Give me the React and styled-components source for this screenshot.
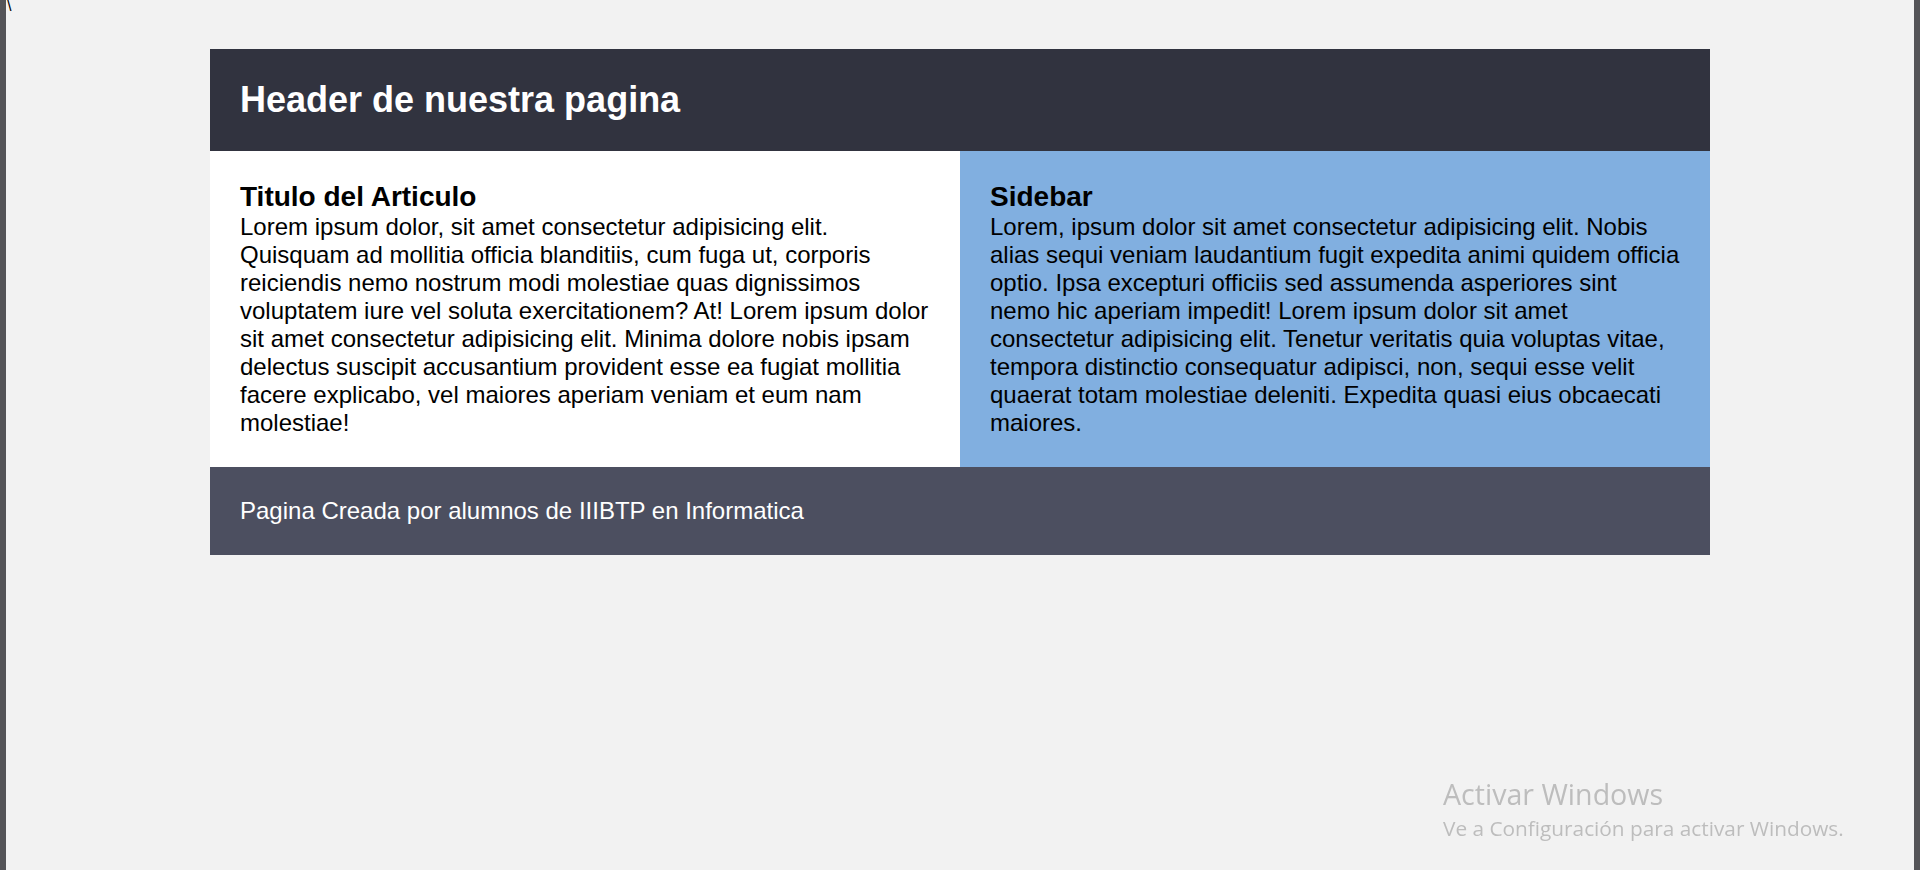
import React from "react";
import styled, { createGlobalStyle } from "styled-components";

const GlobalStyle = createGlobalStyle`
  html, body {
    margin: 0;
    padding: 0;
    background: #f2f2f2;
    font-family: "Liberation Sans", Arial, sans-serif;
  }
`;

const Screen = styled.div`
  display: flex;
  min-height: 100vh;
  background: #f2f2f2;
`;

const WindowEdge = styled.div`
  width: 6px;
  flex-shrink: 0;
  background: #545458;
`;

const Viewport = styled.div`
  flex: 1;
  position: relative;
`;

const Stray = styled.div`
  height: 13px;
  padding-left: 1px;
  font-size: 16px;
  line-height: 12px;
  color: #000;
  overflow: hidden;
`;

const Layout = styled.div`
  width: 1500px;
  margin: 36px auto 0;
  display: grid;
  grid-template-columns: 1fr 1fr;
  grid-template-areas:
    "header header"
    "main side"
    "footer footer";
`;

const Header = styled.header`
  grid-area: header;
  background: #31333f;
  color: #fff;
  padding: 30px;

  h1 {
    margin: 0;
    font-size: 36px;
    font-weight: 700;
  }
`;

const Panel = styled.section`
  grid-area: ${({ $area }) => $area};
  background: ${({ $bg }) => $bg};
  color: #000;
  padding: 30px;
  font-size: 24px;

  h3 {
    margin: 0;
    font-size: 28px;
    font-weight: 700;
  }

  p {
    margin: 0;
  }
`;

const Footer = styled.footer`
  grid-area: footer;
  background: #4c4f60;
  color: #fff;
  padding: 30px;
  font-size: 24px;
`;

const Watermark = styled.div`
  position: fixed;
  left: 1443px;
  top: 776px;
  font-family: "Open Sans", "Noto Sans", sans-serif;
  color: #bdbdbd;
  pointer-events: none;
`;

const WatermarkTitle = styled.div`
  font-size: 28.6px;
  line-height: 36px;
`;

const WatermarkText = styled.div`
  font-size: 20.8px;
  line-height: 33px;
`;

const App = () => {
  return (
    <>
      <GlobalStyle />
      <Screen>
        <WindowEdge />
        <Viewport>
          <Stray>\</Stray>
          <Layout>
            <Header>
              <h1>Header de nuestra pagina</h1>
            </Header>
            <Panel $area="main" $bg="#ffffff">
              <h3>Titulo del Articulo</h3>
              <p>
                Lorem ipsum dolor, sit amet consectetur adipisicing elit.
                Quisquam ad mollitia officia blanditiis, cum fuga ut, corporis
                reiciendis nemo nostrum modi molestiae quas dignissimos
                voluptatem iure vel soluta exercitationem? At! Lorem ipsum dolor
                sit amet consectetur adipisicing elit. Minima dolore nobis ipsam
                delectus suscipit accusantium provident esse ea fugiat mollitia
                facere explicabo, vel maiores aperiam veniam et eum nam
                molestiae!
              </p>
            </Panel>
            <Panel $area="side" $bg="#81afe0">
              <h3>Sidebar</h3>
              <p>
                Lorem, ipsum dolor sit amet consectetur adipisicing elit. Nobis
                alias sequi veniam laudantium fugit expedita animi quidem officia
                optio. Ipsa excepturi officiis sed assumenda asperiores sint nemo
                hic aperiam impedit! Lorem ipsum dolor sit amet consectetur
                adipisicing elit. Tenetur veritatis quia voluptas vitae, tempora
                distinctio consequatur adipisci, non, sequi esse velit quaerat
                totam molestiae deleniti. Expedita quasi eius obcaecati maiores.
              </p>
            </Panel>
            <Footer>Pagina Creada por alumnos de IIIBTP en Informatica</Footer>
          </Layout>
          <Watermark>
            <WatermarkTitle>Activar Windows</WatermarkTitle>
            <WatermarkText>Ve a Configuración para activar Windows.</WatermarkText>
          </Watermark>
        </Viewport>
        <WindowEdge />
      </Screen>
    </>
  );
};

export default App;
